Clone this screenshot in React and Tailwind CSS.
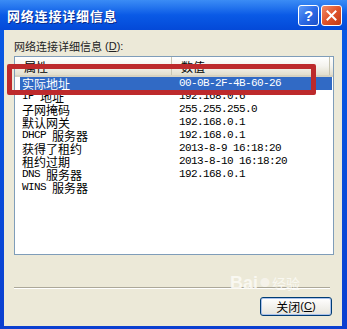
import React from 'react';

// 把 ASCII 和中文分开渲染：中文 12px 宋体宽度，ASCII 6px 等宽
function Txt({ text }) {
    const parts = text.split(/([\x00-\x7f]+)/).filter(Boolean);
    return (
        <>
            {parts.map((p, i) =>
                /^[\x00-\x7f]+$/.test(p) ? (
                    <span key={i} className="inline-block h-[13px] leading-[13px] align-top font-['Liberation_Mono',monospace] text-[11px] tracking-[-0.6px] whitespace-pre">
                        {p}
                    </span>
                ) : (
                    <span key={i} className="inline-block h-[13px] leading-[13px] align-top">{p}</span>
                )
            )}
        </>
    );
}

const rows = [
    ['实际地址', '00-0B-2F-4B-60-26'],
    ['IP 地址', '192.168.0.6'],
    ['子网掩码', '255.255.255.0'],
    ['默认网关', '192.168.0.1'],
    ['DHCP 服务器', '192.168.0.1'],
    ['获得了租约', '2013-8-9 16:18:20'],
    ['租约过期', '2013-8-10 16:18:20'],
    ['DNS 服务器', '192.168.0.1'],
    ['WINS 服务器', ''],
];

export default function App() {
    return (
        <div className="relative w-[347px] h-[329px] flex flex-col bg-gradient-to-b from-[#0a5ce6] to-[#0b3fd0] font-['Noto_Sans_CJK_SC','Noto_Sans',sans-serif] text-black overflow-hidden">
            {/* 标题栏 */}
            <div className="h-[30px] flex items-center pl-[7px] pr-[5px] bg-gradient-to-b from-[#3b8cf5] via-[#0a5ae6] to-[#0449d8]">
                <span className="text-white font-bold text-[13px] leading-none [text-shadow:1px_1px_0_#0a2a8a] tracking-[0.8px]">
                    网络连接详细信息
                </span>
                <div className="ml-auto flex gap-[2px] items-center">
                    <div className="w-[21px] h-[21px] rounded-[3px] border border-white bg-gradient-to-br from-[#5f9bf7] via-[#2c6ae6] to-[#1b4fc9] flex items-center justify-center text-white font-bold text-[15px] leading-none font-['Liberation_Sans',sans-serif]">
                        ?
                    </div>
                    <div className="w-[21px] h-[21px] rounded-[3px] border border-white bg-gradient-to-br from-[#f08a66] via-[#e0532a] to-[#c23a14] flex items-center justify-center">
                        <svg width="11" height="11" viewBox="0 0 11 11">
                            <path d="M1.5 1.5 L9.5 9.5 M9.5 1.5 L1.5 9.5" stroke="white" strokeWidth="2" strokeLinecap="square" />
                        </svg>
                    </div>
                </div>
            </div>

            {/* 窗口主体 */}
            <div className="relative flex-1 ml-[4px] mr-[5px] mb-[3px] bg-[#ece9d8] flex flex-col pl-[10px]">
                <div className="mt-[8px] h-[16px] flex items-center text-[11px] leading-none text-[#222]">
                    <span>网络连接详细信息</span>
                    <span className="font-['Liberation_Sans',sans-serif] ml-[3px]">(<span className="underline">D</span>):</span>
                </div>

                <div className="mt-[2px] w-[320px] h-[199px] border border-[#7f9db9] bg-white flex flex-col text-[12px] leading-[13px]">
                    {/* 列表头 */}
                    <div className="h-[20px] flex items-stretch bg-gradient-to-b from-[#ffffff] via-[#f4f3ee] to-[#e2decd] border-b-[2px] border-[#d6d2c2]">
                        <div className="w-[157px] flex items-center pl-[9px] border-r border-[#c7c5b2]">属性</div>
                        <div className="w-[158px] flex items-center pl-[9px] border-r border-[#c7c5b2]">数值</div>
                    </div>
                    {rows.map(([k, v], i) => (
                        <div
                            key={k}
                            className={
                                'h-[13px] ml-[5px] mr-[1px] flex items-start ' +
                                (i === 0 ? 'bg-[#316ac5] text-white' : '')
                            }
                        >
                            <div className="w-[153px] pl-[2px] whitespace-nowrap">
                                <Txt text={k} />
                            </div>
                            <div className="pl-[6px] whitespace-nowrap">
                                <Txt text={v} />
                            </div>
                        </div>
                    ))}
                </div>

                {/* 分隔线 */}
                <div className="mt-[32px] w-[316px] h-[2px] border-t border-[#aca899] border-b border-b-white" />

                <div className="mt-[8px] w-[318px] flex justify-end">
                    <button className="w-[72px] h-[19px] rounded-[3px] border border-[#003c74] bg-gradient-to-b from-[#ffffff] to-[#e6e4dc] shadow-[inset_0_0_0_1px_#a9c1ec] flex items-center justify-center text-[12px] leading-none">
                        <span>关闭</span>
                        <span className="font-['Liberation_Sans',sans-serif] text-[11px]">(<span className="underline">C</span>)</span>
                    </button>
                </div>

                {/* 百度经验水印 */}
                <div className="absolute left-[226px] top-[244px] flex items-center gap-[2px] text-[#fbfaf4] opacity-90 pointer-events-none">
                    <span className="font-['Liberation_Sans',sans-serif] font-bold text-[18px] leading-none">Bai</span>
                    <span className="text-[#f6f4ec] text-[10px] leading-none">●</span>
                    <span className="text-[14px] leading-none">经验</span>
                </div>
            </div>

            {/* 红色标注框 */}
            <div className="absolute left-[7px] top-[64px] w-[309px] h-[31px] border-[5px] border-[#bd2a2c] rounded-[2px]" />
        </div>
    );
}
